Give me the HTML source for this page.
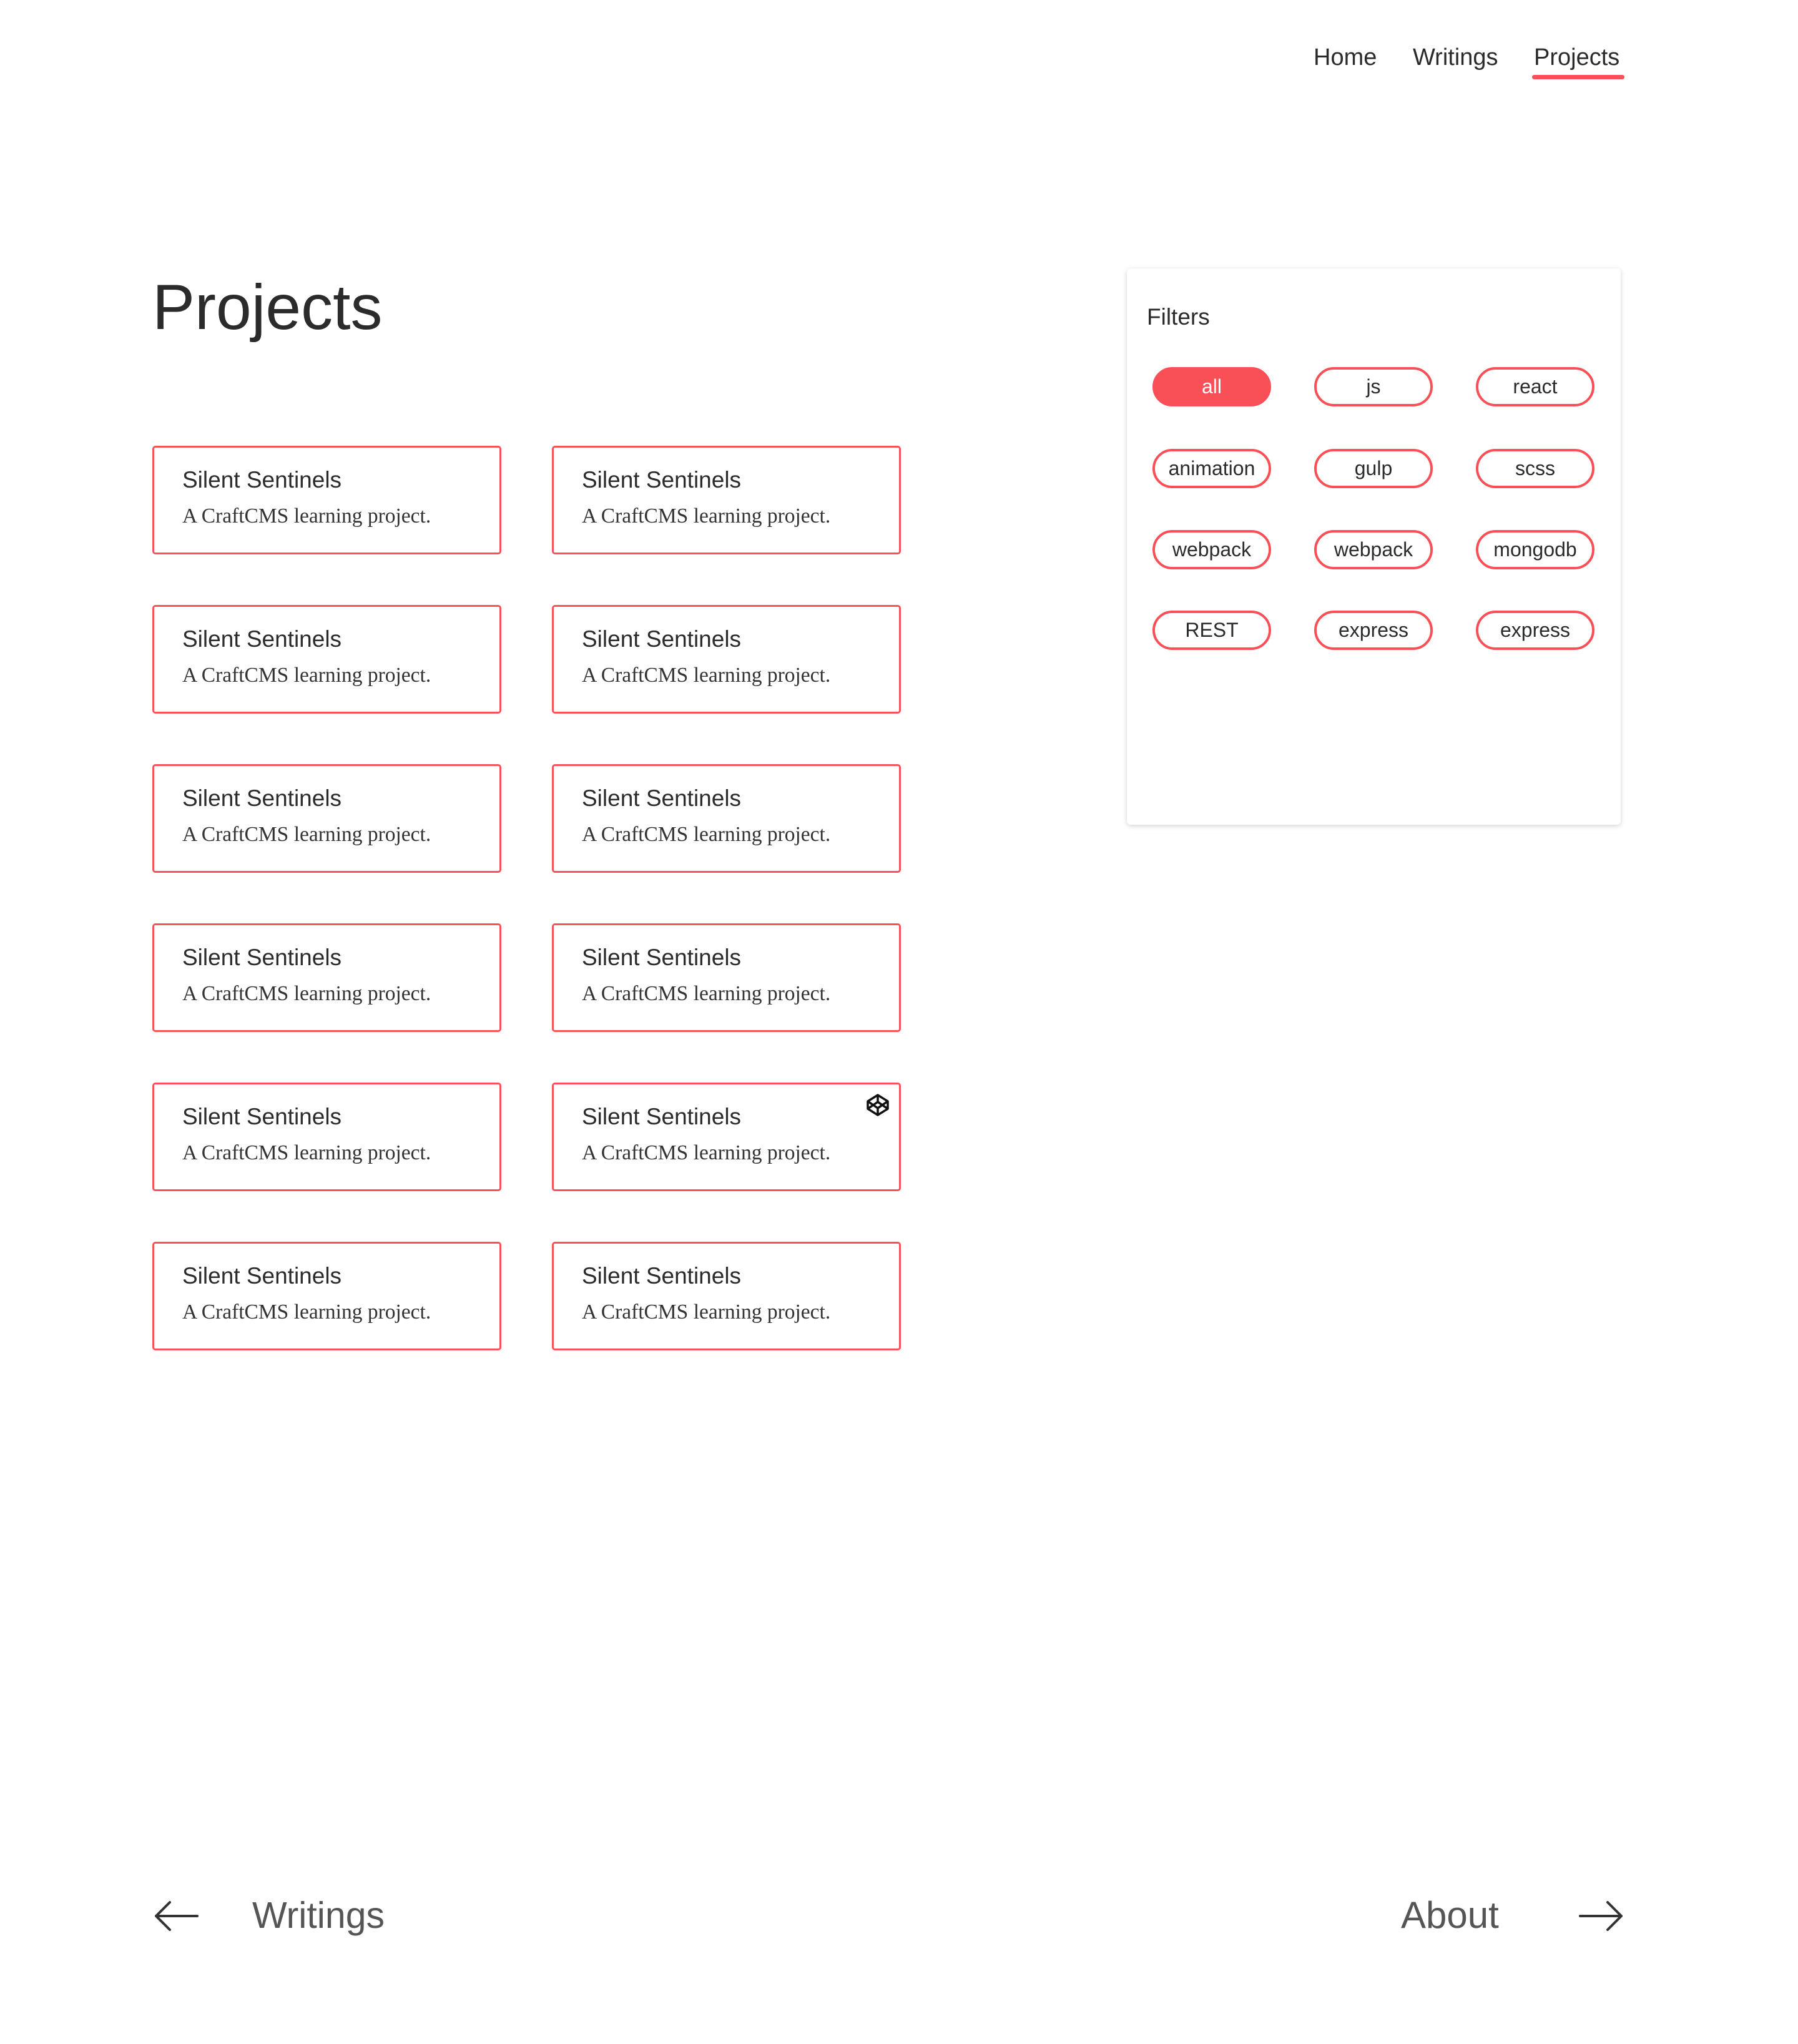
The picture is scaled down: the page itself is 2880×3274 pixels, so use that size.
<!DOCTYPE html>
<html><head><meta charset="utf-8"><style>
*{margin:0;padding:0;box-sizing:border-box}
body{width:2880px;height:3274px;background:#fff;position:relative;font-family:"Liberation Sans",sans-serif;color:#2b2b2b;overflow:hidden}
.a{position:absolute;white-space:nowrap}
.nav{font-size:38px;top:68px;line-height:48px}
.card{position:absolute;width:559px;height:174px;border:3px solid #f7525a;border-radius:5px}
.card h3{position:absolute;left:45px;top:29px;font-size:37px;font-weight:normal;line-height:46px;color:#2b2b2b}
.card p{position:absolute;left:45px;top:90px;font-family:"Liberation Serif",serif;font-size:33.5px;line-height:40px;color:#333}
.pill{position:absolute;width:190px;height:63px;border:4px solid #f94f56;border-radius:32px;text-align:center;font-size:32px;line-height:55px;color:#2b2b2b}
</style></head><body>
<div class="a nav" style="left:2104px">Home</div>
<div class="a nav" style="left:2263px">Writings</div>
<div class="a nav" style="left:2457px">Projects</div>
<div class="a" style="left:2454px;top:120px;width:148px;height:7px;border-radius:4px;background:#f94f56"></div>

<div class="a" style="left:244px;top:432px;font-size:102px;line-height:120px;color:#2b2b2b">Projects</div>

<div class="card" style="left:244px;top:714px"><h3>Silent Sentinels</h3><p>A CraftCMS learning project.</p></div>
<div class="card" style="left:884px;top:714px"><h3>Silent Sentinels</h3><p>A CraftCMS learning project.</p></div>
<div class="card" style="left:244px;top:969px"><h3>Silent Sentinels</h3><p>A CraftCMS learning project.</p></div>
<div class="card" style="left:884px;top:969px"><h3>Silent Sentinels</h3><p>A CraftCMS learning project.</p></div>
<div class="card" style="left:244px;top:1224px"><h3>Silent Sentinels</h3><p>A CraftCMS learning project.</p></div>
<div class="card" style="left:884px;top:1224px"><h3>Silent Sentinels</h3><p>A CraftCMS learning project.</p></div>
<div class="card" style="left:244px;top:1479px"><h3>Silent Sentinels</h3><p>A CraftCMS learning project.</p></div>
<div class="card" style="left:884px;top:1479px"><h3>Silent Sentinels</h3><p>A CraftCMS learning project.</p></div>
<div class="card" style="left:244px;top:1734px"><h3>Silent Sentinels</h3><p>A CraftCMS learning project.</p></div>
<div class="card" style="left:884px;top:1734px"><h3>Silent Sentinels</h3><p>A CraftCMS learning project.</p>
<svg style="position:absolute;left:500px;top:14px" width="38" height="38" viewBox="0 0 38 38" fill="none" stroke="#111" stroke-width="3.5" stroke-linejoin="round"><path d="M19 3L35 13V25L19 35L3 25V13Z"/><path d="M3 13L19 24L35 13M3 25L19 14L35 25M19 3V14M19 24V35"/></svg></div>
<div class="card" style="left:244px;top:1989px"><h3>Silent Sentinels</h3><p>A CraftCMS learning project.</p></div>
<div class="card" style="left:884px;top:1989px"><h3>Silent Sentinels</h3><p>A CraftCMS learning project.</p></div>

<div class="a" style="left:1805px;top:430px;width:791px;height:891px;border-radius:6px;box-shadow:0 2px 8px rgba(0,0,0,0.18);background:#fff"></div>
<div class="a" style="left:1837px;top:485px;font-size:37px;line-height:46px">Filters</div>
<div class="pill" style="left:1846px;top:588px;background:#f94f56;color:#fff">all</div>
<div class="pill" style="left:2105px;top:588px">js</div>
<div class="pill" style="left:2364px;top:588px">react</div>
<div class="pill" style="left:1846px;top:719px">animation</div>
<div class="pill" style="left:2105px;top:719px">gulp</div>
<div class="pill" style="left:2364px;top:719px">scss</div>
<div class="pill" style="left:1846px;top:849px">webpack</div>
<div class="pill" style="left:2105px;top:849px">webpack</div>
<div class="pill" style="left:2364px;top:849px">mongodb</div>
<div class="pill" style="left:1846px;top:978px">REST</div>
<div class="pill" style="left:2105px;top:978px">express</div>
<div class="pill" style="left:2364px;top:978px">express</div>

<svg class="a" style="left:244px;top:3042px" width="76" height="54" viewBox="0 0 76 54" fill="none" stroke="#333" stroke-width="4" stroke-linecap="round" stroke-linejoin="round"><path d="M72 27H6M28 5L6 27L28 49"/></svg>
<div class="a" style="left:404px;top:3034px;font-size:59px;line-height:68px;color:#555">Writings</div>
<div class="a" style="left:2244px;top:3034px;font-size:60px;line-height:68px;color:#555">About</div>
<svg class="a" style="left:2527px;top:3042px" width="76" height="54" viewBox="0 0 76 54" fill="none" stroke="#333" stroke-width="4" stroke-linecap="round" stroke-linejoin="round"><path d="M4 27H70M48 5L70 27L48 49"/></svg>
</body></html>
